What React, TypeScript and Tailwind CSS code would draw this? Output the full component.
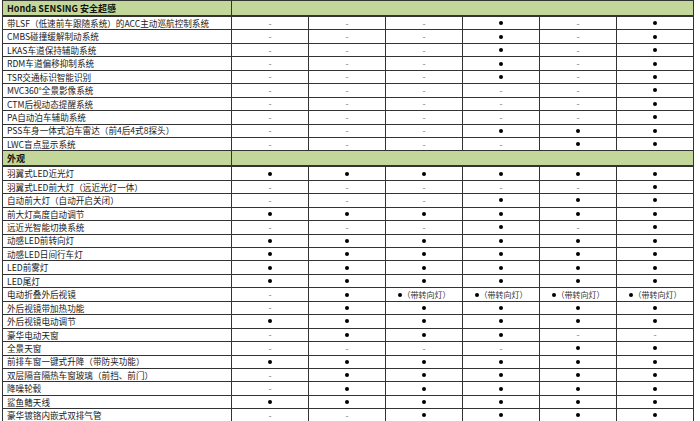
import React from "react";

type Cell = "-" | "o" | "t";

const font = { fontFamily: '"Noto Sans CJK SC", "Noto Sans", sans-serif' };

const sensing: [string, Cell[]][] = [
  ["带LSF（低速前车跟随系统）的ACC主动巡航控制系统", ["-", "-", "-", "o", "-", "o"]],
  ["CMBS碰撞缓解制动系统", ["-", "-", "-", "o", "-", "o"]],
  ["LKAS车道保持辅助系统", ["-", "-", "-", "o", "-", "o"]],
  ["RDM车道偏移抑制系统", ["-", "-", "-", "o", "-", "o"]],
  ["TSR交通标识智能识别", ["-", "-", "-", "o", "-", "o"]],
  ["MVC360°全景影像系统", ["-", "-", "-", "-", "-", "o"]],
  ["CTM后视动态提醒系统", ["-", "-", "-", "-", "-", "o"]],
  ["PA自动泊车辅助系统", ["-", "-", "-", "-", "-", "o"]],
  ["PSS车身一体式泊车雷达（前4后4式8探头）", ["-", "-", "-", "o", "o", "o"]],
  ["LWC盲点显示系统", ["-", "-", "-", "-", "o", "o"]],
];

const all: Cell[] = ["o", "o", "o", "o", "o", "o"];

const exterior: [string, Cell[]][] = [
  ["羽翼式LED近光灯", all],
  ["羽翼式LED前大灯（远近光灯一体）", ["-", "-", "-", "-", "-", "o"]],
  ["自动前大灯（自动开启关闭）", ["-", "-", "-", "o", "o", "o"]],
  ["前大灯高度自动调节", all],
  ["远近光智能切换系统", ["-", "-", "-", "o", "-", "o"]],
  ["动感LED前转向灯", all],
  ["动感LED日间行车灯", all],
  ["LED前雾灯", all],
  ["LED尾灯", all],
  ["电动折叠外后视镜", ["-", "o", "t", "t", "t", "t"]],
  ["外后视镜带加热功能", ["-", "o", "o", "o", "o", "o"]],
  ["外后视镜电动调节", all],
  ["豪华电动天窗", ["-", "o", "o", "o", "-", "-"]],
  ["全景天窗", ["-", "-", "-", "-", "o", "o"]],
  ["前排车窗一键式升降（带防夹功能）", all],
  ["双层隔音隔热车窗玻璃（前挡、前门）", ["-", "o", "o", "o", "o", "o"]],
  ["降噪轮毂", ["-", "o", "o", "o", "o", "o"]],
  ["鲨鱼鳍天线", all],
  ["豪华镀铬内嵌式双排气管", ["-", "-", "o", "o", "o", "o"]],
];

const Dot = () => <span className="block w-[4px] h-[4px] rounded-full bg-black" />;

function Value({ v }: { v: Cell }) {
  if (v === "-") return <span className="text-[#7a7a7a] text-[9px] leading-none">-</span>;
  if (v === "o") return <Dot />;
  return (
    <span className="flex items-center gap-[1px] text-[8px] text-[#333] leading-none">
      <Dot />
      <span>（带转向灯）</span>
    </span>
  );
}

function Section({ title }: { title: string }) {
  return (
    <tr className="bg-[#c4d79b]">
      <td className="p-0 border border-[#333] border-b-2">
        <div className="h-[14px] flex items-center px-[4px] text-[9px] font-bold text-[#111] leading-none">{title}</div>
      </td>
      <td colSpan={6} className="p-0 border border-[#333] border-b-2"></td>
    </tr>
  );
}

function Row({ label, cells }: { label: string; cells: Cell[] }) {
  return (
    <tr>
      <td className="p-0 border border-[#333] text-[8.6px] leading-none">
        <div className="h-[12.45px] flex items-center px-[4px] text-[#1a1a1a] whitespace-nowrap">{label}</div>
      </td>
      {cells.map((c, i) => (
        <td
          key={i}
          className={`p-0 border text-[8px] leading-none ${i === 4 ? "border-l-[#999] border-y-[#333] border-r-[#333]" : "border-[#333]"}`}
        >
          <div className="h-[12.45px] flex items-center justify-center">
            <Value v={c} />
          </div>
        </td>
      ))}
    </tr>
  );
}

export default function App() {
  return (
    <div className="w-[700px] h-[421px] bg-white overflow-hidden pl-[2px]" style={font}>
      <table className="table-fixed border-collapse w-[691px]">
        <colgroup>
          <col className="w-[229px]" />
          <col className="w-[77px]" />
          <col className="w-[77px]" />
          <col className="w-[77px]" />
          <col className="w-[77px]" />
          <col className="w-[77px]" />
          <col className="w-[77px]" />
        </colgroup>
        <tbody>
          <Section title="Honda SENSING 安全超感" />
          {sensing.map(([l, c]) => (
            <Row key={l} label={l} cells={c} />
          ))}
          <Section title="外观" />
          {exterior.map(([l, c]) => (
            <Row key={l} label={l} cells={c} />
          ))}
        </tbody>
      </table>
    </div>
  );
}
